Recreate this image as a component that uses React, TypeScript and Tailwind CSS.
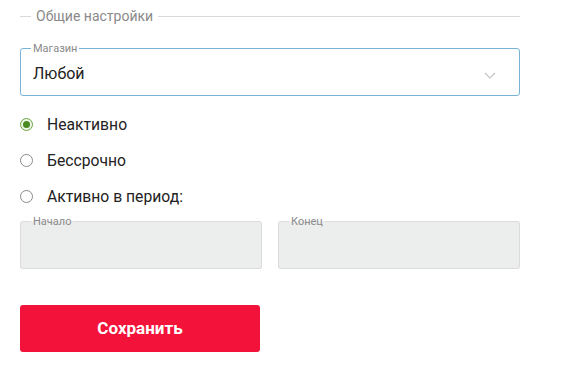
import { useState } from "react";

const OPTIONS = [
  { value: "inactive", label: "Неактивно" },
  { value: "forever", label: "Бессрочно" },
  { value: "period", label: "Активно в период:" },
];

function Radio({ checked }: { checked: boolean }) {
  return checked ? (
    <span className="flex h-[13px] w-[13px] items-center justify-center rounded-full border border-[#6aa442] bg-[#eef6e8]">
      <span className="block h-[7px] w-[7px] rounded-full bg-[#4a8a22]" />
    </span>
  ) : (
    <span className="block h-[13px] w-[13px] rounded-full border border-[#8a8a8a] bg-white" />
  );
}

export default function App() {
  const [status, setStatus] = useState("inactive");

  return (
    <div className="min-h-[375px] w-[563px] bg-white px-5 pt-[7px] font-['Roboto',sans-serif]">
      {/* section header */}
      <div className="flex w-[500px] items-center gap-[5px]">
        <span className="h-px w-[11px] bg-[#d9d9d9]" />
        <span className="text-[14px] leading-[18px] text-[#8a8a8a]">Общие настройки</span>
        <span className="h-px flex-1 bg-[#d9d9d9]" />
      </div>

      <fieldset className="mt-[17px] h-[54px] w-[500px] rounded-[3px] border border-[#7ab2d6] px-3">
        <legend className="ml-[-2px] px-[2px] text-[11px] leading-[13px] text-[#8a8a8a]">Магазин</legend>
        <div className="flex h-[40px] items-center justify-between">
          <span className="-mt-[3px] text-[16px] text-[#222]">Любой</span>
          <svg width="12" height="7" viewBox="0 0 12 7" className="mr-[11px]">
            <path d="M1 1l5 5 5-5" fill="none" stroke="#c4c4c4" strokeWidth="1.2" />
          </svg>
        </div>
      </fieldset>

      <div className="mt-[18px] flex flex-col gap-[15px]">
        {OPTIONS.map((o) => (
          <label key={o.value} className="flex h-[21px] cursor-pointer items-center" onClick={() => setStatus(o.value)}>
            <span className="w-[27px]">
              <Radio checked={status === o.value} />
            </span>
            <span className="text-[15.7px] text-[#222]">{o.label}</span>
          </label>
        ))}
      </div>

      <div className="mt-[8px] grid w-[500px] grid-cols-2 gap-4">
        {["Начало", "Конец"].map((l) => (
          <fieldset key={l} className="h-[54px] rounded-[3px] border border-[#dcdcdc] bg-[#eceded] px-3">
            <legend className="ml-[-2px] px-[2px] text-[11px] leading-[13px] text-[#8a8a8a]">{l}</legend>
          </fieldset>
        ))}
      </div>

      <button
        type="button"
        className="mt-[36px] h-[47px] w-[240px] rounded-[3px] bg-[#f31239] text-[17px] font-bold text-white"
      >
        Сохранить
      </button>
    </div>
  );
}
